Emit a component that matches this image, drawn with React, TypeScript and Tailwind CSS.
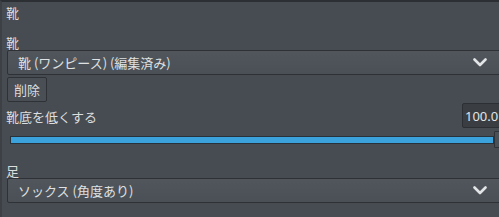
import React from "react";

const font = { fontFamily: '"Noto Sans CJK JP", "Noto Sans", sans-serif' };

function Chevron() {
  return (
    <svg width="14" height="9" viewBox="0 0 14 9" className="shrink-0">
      <polyline points="1.5,1.5 7,7 12.5,1.5" fill="none" stroke="#e2e4e6" strokeWidth="2.6" strokeLinecap="round" strokeLinejoin="round" />
    </svg>
  );
}

function Select({ text }: { text: string }) {
  return (
    <div className="ml-[1px] w-[494px] h-[25px] flex items-center justify-between pl-[10px] pr-[13px] border border-[#2e3236] bg-gradient-to-b from-[#51565c] to-[#4b5056] rounded-[2px]">
      <span className="text-[13px] leading-[16px] text-[#dfe0e1] whitespace-nowrap">{text}</span>
      <Chevron />
    </div>
  );
}

export default function App() {
  return (
    <div
      style={font}
      className="w-[499px] h-[217px] overflow-hidden bg-[#474c52] border-t-2 border-t-[#2c2f33] border-l-2 border-l-[#3d4146] flex flex-col pl-[4px] pt-[3px] text-[#dcdddf]"
    >
      <div className="text-[13px] leading-[16px] h-[16px]">靴</div>
      <div className="text-[13px] leading-[15px] h-[15px] mt-[14px]">靴</div>
      <Select text="靴 (ワンピース) (編集済み)" />
      <div className="ml-[1px] mt-[2px] w-[40px] h-[25px] flex items-center justify-center border border-[#2e3236] bg-[#4a4f55] rounded-[2px] text-[13px] leading-[16px]">
        削除
      </div>
      <div className="mt-[1px] flex items-start justify-between h-[25px]">
        <div className="text-[13px] leading-[16px] pt-[6px]">靴底を低くする</div>
        <div className="w-[42px] h-[25px] -mr-[5px] flex items-center pl-[2px] bg-[#3a3e43] border border-[#2c2f33] rounded-[2px] text-[13px] leading-[16px] text-[#e3e4e5] whitespace-nowrap" style={{ fontFamily: '"Noto Sans", sans-serif' }}>
          100.0
        </div>
      </div>
      <div className="mt-[3px] h-[17px] flex items-center ml-[4px] -mr-[6px]">
        <div className="flex-1 h-[8px] bg-[#3ba2dc] border border-[#27323b]" />
        <div className="w-[11px] h-[17px] bg-[#4b5056] border border-[#2e3236] rounded-[1px]" />
      </div>
      <div className="text-[13px] leading-[15px] h-[15px] mt-[15px]">足</div>
      <Select text="ソックス (角度あり)" />
    </div>
  );
}
